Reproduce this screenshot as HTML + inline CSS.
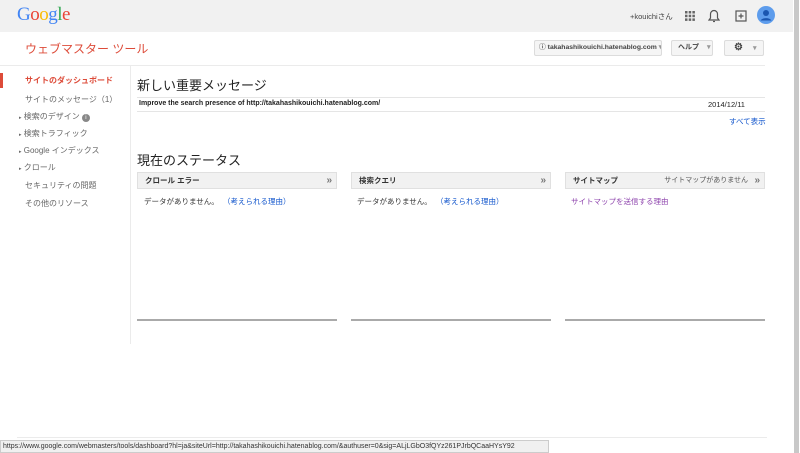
<!DOCTYPE html><html><head><meta charset="utf-8"><style>
*{margin:0;padding:0;box-sizing:border-box}
body{width:800px;height:453px;overflow:hidden;background:#fff;font-family:"Liberation Sans","Noto Sans CJK JP",sans-serif;color:#333;position:relative}
.a{position:absolute;white-space:nowrap}
.hdr{position:absolute;left:0;top:0;width:793px;height:32px;background:#f1f1f1}
.btn{position:absolute;top:40px;height:16px;border:1px solid #dcdcdc;background:#f5f5f5;border-radius:2px;font-size:7px;font-weight:bold;line-height:14px;color:#444;white-space:nowrap;overflow:hidden}
.side{font-size:8px;color:#666}
.box{position:absolute;top:172px;height:17px;background:#f1f1f1;border:1px solid #e0e0e0;font-size:7.5px;font-weight:bold;line-height:15px;padding-left:7px;color:#333;white-space:nowrap}
.box .ar{position:absolute;right:4px;top:0;font-size:10px;color:#777;font-weight:bold}
.bl{position:absolute;top:319px;height:2px;background:#aaa;width:200px}
.nd{position:absolute;top:196px;font-size:7.5px;color:#333;white-space:nowrap}
.nd span{color:#1155cc;margin-left:8px}
</style></head><body>
<div class="hdr"></div>
<div class="a" style="left:17px;top:4px;font-size:19px;letter-spacing:-0.5px;font-family:'Liberation Serif',serif"><span style="color:#4285f4">G</span><span style="color:#ea4335">o</span><span style="color:#fbbc05">o</span><span style="color:#4285f4">g</span><span style="color:#34a853">l</span><span style="color:#ea4335">e</span></div>
<div class="a" style="left:630px;top:11px;font-size:7.5px;color:#444">+kouichiさん</div>
<svg class="a" style="left:685px;top:11px" width="10" height="10"><g fill="#666"><rect x="0" y="0" width="2.5" height="2.5"/><rect x="3.7" y="0" width="2.5" height="2.5"/><rect x="7.4" y="0" width="2.5" height="2.5"/><rect x="0" y="3.7" width="2.5" height="2.5"/><rect x="3.7" y="3.7" width="2.5" height="2.5"/><rect x="7.4" y="3.7" width="2.5" height="2.5"/><rect x="0" y="7.4" width="2.5" height="2.5"/><rect x="3.7" y="7.4" width="2.5" height="2.5"/><rect x="7.4" y="7.4" width="2.5" height="2.5"/></g></svg>
<svg class="a" style="left:708px;top:9px" width="12" height="14"><path d="M6 1.5a3.5 3.5 0 0 0-3.5 3.5v4L1 11h10L9.5 9V5A3.5 3.5 0 0 0 6 1.5z" fill="none" stroke="#555" stroke-width="1.2"/><path d="M5 12.5h2" stroke="#555" stroke-width="1.2"/></svg>
<svg class="a" style="left:735px;top:10px" width="12" height="12"><rect x="1" y="1" width="10" height="10" fill="none" stroke="#555" stroke-width="1.2"/><path d="M6 3.5v5M3.5 6h5" stroke="#555" stroke-width="1.2"/></svg>
<svg class="a" style="left:757px;top:6px" width="18" height="18"><circle cx="9" cy="9" r="9" fill="#5d9cec"/><circle cx="9" cy="7" r="3" fill="#1a56b0"/><path d="M3.5 14.5a6 4 0 0 1 11 0" fill="#1a56b0"/></svg>
<div style="position:absolute;left:794px;top:0;width:5px;height:453px;background:#c8c8c8"></div>
<div class="a" style="left:25px;top:40px;font-size:12px;color:#dd4b39">ウェブマスター ツール</div>
<div class="btn" style="left:534px;width:128px;padding-left:4px;font-size:6.8px">ⓘ takahashikouichi.hatenablog.com <span style="color:#999">▾</span></div>
<div class="btn" style="left:671px;width:42px;padding-left:6px">ヘルプ <span style="color:#999;margin-left:6px">▾</span></div>
<div class="btn" style="left:724px;width:40px;padding-left:9px;font-size:10px;line-height:13px">⚙<span style="color:#999;font-size:7px;margin-left:10px">▾</span></div>
<div style="position:absolute;left:0;top:65px;width:765px;height:1px;background:#ebebeb"></div>
<div style="position:absolute;left:130px;top:66px;width:1px;height:278px;background:#ebebeb"></div>
<div style="position:absolute;left:0;top:73px;width:3px;height:15px;background:#dd4b39"></div>
<div class="a side" style="left:25px;top:75px;color:#dd4b39;font-weight:bold">サイトのダッシュボード</div>
<div class="a side" style="left:25px;top:94px">サイトのメッセージ（1）</div>
<div class="a side" style="left:19px;top:111px"><span style="font-size:5px">▸</span> 検索のデザイン <span style="display:inline-block;width:8px;height:8px;border-radius:4px;background:#888;color:#fff;font-size:6px;text-align:center;line-height:8px">i</span></div>
<div class="a side" style="left:19px;top:128px"><span style="font-size:5px">▸</span> 検索トラフィック</div>
<div class="a side" style="left:19px;top:145px"><span style="font-size:5px">▸</span> Google インデックス</div>
<div class="a side" style="left:19px;top:162px"><span style="font-size:5px">▸</span> クロール</div>
<div class="a side" style="left:25px;top:180px">セキュリティの問題</div>
<div class="a side" style="left:25px;top:198px">その他のリソース</div>
<div class="a" style="left:137px;top:75px;font-size:13px;color:#222">新しい重要メッセージ</div>
<div style="position:absolute;left:137px;top:97px;width:628px;height:1px;background:#e5e5e5"></div>
<div style="position:absolute;left:137px;top:111px;width:628px;height:1px;background:#e5e5e5"></div>
<div class="a" style="left:139px;top:100px;font-size:7px;font-weight:bold;color:#222">Improve the search presence of http://takahashikouichi.hatenablog.com/</div>
<div class="a" style="left:708px;top:100px;font-size:7.5px;color:#222">2014/12/11</div>
<div class="a" style="left:729px;top:116px;font-size:7.5px;color:#1155cc">すべて表示</div>
<div class="a" style="left:137px;top:150px;font-size:13px;color:#222">現在のステータス</div>
<div class="box" style="left:137px;width:200px">クロール エラー<span class="ar">»</span></div>
<div class="box" style="left:351px;width:200px">検索クエリ<span class="ar">»</span></div>
<div class="box" style="left:565px;width:200px">サイトマップ<span style="position:absolute;right:16px;font-weight:normal;font-size:7px;color:#555">サイトマップがありません</span><span class="ar">»</span></div>
<div class="nd" style="left:144px">データがありません。<span>（考えられる理由）</span></div>
<div class="nd" style="left:357px">データがありません。<span>（考えられる理由）</span></div>
<div class="nd" style="left:571px;color:#8e44ad">サイトマップを送信する理由</div>
<div class="bl" style="left:137px"></div><div class="bl" style="left:351px"></div><div class="bl" style="left:565px"></div>
<div style="position:absolute;left:17px;top:437px;width:750px;height:1px;background:#ebebeb"></div>
<div class="a" style="left:0;top:440px;width:549px;height:13px;background:#f0f0f0;border:1px solid #ccc;font-size:7px;line-height:11px;padding-left:2px;color:#333;overflow:hidden">https://www.google.com/webmasters/tools/dashboard?hl=ja&amp;siteUrl=http://takahashikouichi.hatenablog.com/&amp;authuser=0&amp;sig=ALjLGbO3fQYz261PJrbQCaaHYsY92</div>
</body></html>
